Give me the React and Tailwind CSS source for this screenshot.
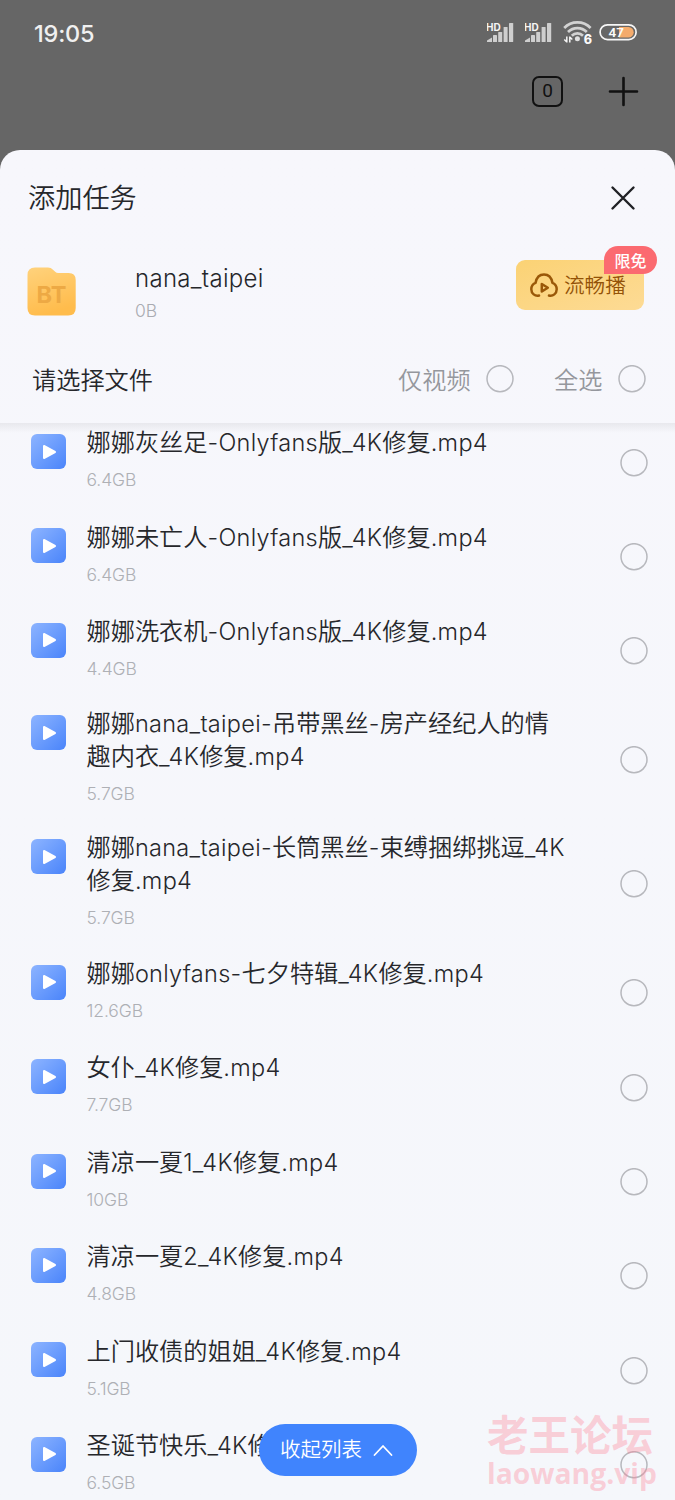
const files = [
  { name: "娜娜灰丝足-Onlyfans版_4K修复.mp4", size: "6.4GB" },
  { name: "娜娜未亡人-Onlyfans版_4K修复.mp4", size: "6.4GB" },
  { name: "娜娜洗衣机-Onlyfans版_4K修复.mp4", size: "4.4GB" },
  { name: "娜娜nana_taipei-吊带黑丝-房产经纪人的情\n趣内衣_4K修复.mp4", size: "5.7GB" },
  { name: "娜娜nana_taipei-长筒黑丝-束缚捆绑挑逗_4K\n修复.mp4", size: "5.7GB" },
  { name: "娜娜onlyfans-七夕特辑_4K修复.mp4", size: "12.6GB" },
  { name: "女仆_4K修复.mp4", size: "7.7GB" },
  { name: "清凉一夏1_4K修复.mp4", size: "10GB" },
  { name: "清凉一夏2_4K修复.mp4", size: "4.8GB" },
  { name: "上门收债的姐姐_4K修复.mp4", size: "5.1GB" },
  { name: "圣诞节快乐_4K修复.mp4", size: "6.5GB" },
];

function Signal() {
  return (
    <svg width="29" height="24" viewBox="0 0 29 24" className="shrink-0">
      <g fill="#cfcfcf">
        <path d="M0 22v-1.5l5-3v4.500z" />
        <rect x="6" y="15" width="4" height="7" rx="0.6" />
        <rect x="11.2" y="12" width="4" height="10" rx="0.6" />
        <rect x="16.600" y="7" width="4" height="15" rx="0.6" />
        <rect x="22" y="3" width="4.200" height="19" rx="0.6" />
      </g>
      <text x="-1" y="10.500" fontSize="10" fontWeight="700" fill="#f5f5f5" fontFamily="Inter, sans-serif">
        HD
      </text>
    </svg>
  );
}

function Wifi() {
  return (
    <svg width="30" height="26" viewBox="0 0 30 26" className="shrink-0">
      <g fill="none" stroke="#d2d2d2" strokeWidth="2.7">
        <path d="M1.2 9a18.500 18.500 0 0 1 26.400 0" />
        <path d="M5 13a13.200 13.200 0 0 1 18.800 0" />
        <path d="M8.800 16.800a7.900 7.900 0 0 1 11.200 0" />
      </g>
      <circle cx="14.400" cy="19.800" r="2.500" fill="#e0e0e0" />
      <path d="M3.800 17.500v6M1.300 20.500l2.500 2.600M6.800 23.500v-6M6.800 18l2.500 2.600" stroke="#f5f5f5" strokeWidth="1.500" fill="none" />
      <text x="20.800" y="25" fontSize="12.500" fontWeight="800" fill="#fafafa" fontFamily="Inter, sans-serif">
        6
      </text>
    </svg>
  );
}

function Battery() {
  return (
    <svg width="39" height="18" viewBox="0 0 39 18" className="shrink-0">
      <path d="M20 4h9.500a5.200 5.200 0 0 1 0 10.400H20z" fill="#f4ab6c" />
      <rect x="1.100" y="1.800" width="36" height="14.800" rx="7.400" fill="none" stroke="#f7f7f7" strokeWidth="1.700" />
      <text x="9.500" y="14" fontSize="13.500" fontWeight="600" fill="#fafafa" fontFamily="Roboto, sans-serif">
        47
      </text>
    </svg>
  );
}

function Folder() {
  return (
    <svg width="49" height="49" viewBox="0 0 49 49" className="shrink-0">
      <defs>
        <linearGradient id="folder" x1="0" y1="0" x2="0.3" y2="1">
          <stop offset="0" stopColor="#ffd27c" />
          <stop offset="1" stopColor="#ffbc4c" />
        </linearGradient>
      </defs>
      <path d="M0.500 8q0-7.500 7.500-7.500h13q3 0 5 2.200l2.200 2q1.300 1.300 3 1.300h10.500q7 0 7 7v28q0 7.500-7.500 7.500H8Q0.500 48.500 0.500 41z" fill="url(#folder)" />
      <text x="24.500" y="35.500" textAnchor="middle" fontSize="23.500" fontWeight="700" fill="#eda944" fontFamily="Inter, sans-serif">
        BT
      </text>
    </svg>
  );
}

function CloudPlay() {
  return (
    <svg width="28" height="24" viewBox="0 0 28 24" fill="none" stroke="#9a5808" strokeWidth="2.500" strokeLinecap="round" strokeLinejoin="round" className="shrink-0">
      <path d="M9 22.500C5 23.500 1.300 20.500 1.300 16.300c0-3 1.600-5.300 4.200-6.400C6.500 4.800 9.600 1.500 14 1.500s7.500 3.300 8.500 8.400c2.600 1.100 4.200 3.400 4.200 6.400 0 4.200-3.700 7.200-7.700 6.200" />
      <path d="M11.800 11v7.500l6-3.750z" />
    </svg>
  );
}

function VideoIcon() {
  return (
    <span className="flex h-[35px] w-[35px] shrink-0 items-center justify-center rounded-[6px] bg-linear-to-br from-[#8db4ff] to-[#4a84fa]">
      <svg width="15" height="16" viewBox="0 0 15 16" className="ml-px">
        <path d="M2 2v12l11-6z" fill="#fff" stroke="#fff" strokeWidth="2" strokeLinejoin="round" />
      </svg>
    </span>
  );
}

function Radio() {
  return (
    <svg width="28" height="28" viewBox="0 0 28 28" className="block shrink-0">
      <circle cx="14" cy="13.700" r="13" fill="none" stroke="#b7b8bd" strokeWidth="1.500" />
    </svg>
  );
}

/** Latin runs are set slightly smaller than the Chinese glyphs around them. */
function MixedText({ text }) {
  return text.split(/([\x20-\x7e]+)/).map((part, i) =>
    i % 2 ? (
      <span key={i} className="text-[23.5px] tracking-[0.3px]">
        {part}
      </span>
    ) : (
      part
    )
  );
}

function FileRow({ file }) {
  const lines = file.name.split("\n");
  const wrapped = lines.length > 1;
  return (
    <li className={wrapped ? "flex h-[123.8px] shrink-0 pl-[31px] pr-[27px]" : "flex h-[94.4px] shrink-0 pl-[31px] pr-[27px]"}>
      <div className={wrapped ? "pt-[17px]" : "pt-[18.7px]"}>
        <VideoIcon />
      </div>
      <div className={wrapped ? "ml-[20.5px] flex-1 pt-[8.5px]" : "ml-[20.5px] flex-1 pt-[11px]"}>
        {lines.map((line) => (
          <p key={line} className="h-[33px] whitespace-nowrap text-[24.2px] leading-[33px] text-[#26272b]">
            <MixedText text={line} />
          </p>
        ))}
        <p className="mt-[9px] text-[17.5px] leading-6 tracking-[-0.1px] text-[#aeb0b5]">{file.size}</p>
      </div>
      <div className="flex items-center">
        <Radio />
      </div>
    </li>
  );
}

export default function App() {
  return (
    <div className="relative flex h-[1500px] w-[675px] flex-col overflow-hidden bg-[#666666] font-[Inter,'Noto_Sans_CJK_SC',sans-serif] font-[350]">
      <header className="h-[150px] shrink-0">
        <div className="flex h-16 items-center pl-[34px] pr-[37px]">
          <span className="mt-[3px] text-[23.5px] font-medium tracking-[-0.2px] text-[#f0f0f0]">19:05</span>
          <div className="ml-auto flex items-center">
            <Signal />
            <span className="w-[9px]" />
            <Signal />
            <span className="w-[9px]" />
            <Wifi />
            <span className="w-[6px]" />
            <Battery />
          </div>
        </div>
        <div className="flex h-[55px] items-center justify-end pr-9">
          <span className="flex h-[31px] w-[31px] items-center justify-center rounded-[7px] border-[2.5px] border-[#111] font-[Roboto,sans-serif] text-[19px] font-normal text-[#111]">
            0
          </span>
          <svg width="31" height="31" viewBox="0 0 31 31" className="ml-[45px]" stroke="#111" strokeWidth="2.600" strokeLinecap="round">
            <path d="M15.500 2v27M2 15.500h27" />
          </svg>
        </div>
      </header>

      <main className="flex min-h-0 flex-1 flex-col rounded-t-[20px] bg-linear-to-b from-[#f7f7fc] to-[#f5f7fb]">
        <div className="flex h-24 shrink-0 items-center justify-between pl-7 pr-[39px]">
          <h1 className="mt-[3px] text-[27.2px] text-[#26272b]">添加任务</h1>
          <svg width="26" height="26" viewBox="0 0 26 26" stroke="#202125" strokeWidth="2.400" strokeLinecap="round">
            <path d="M2.500 2.500l21 21M23.500 2.500l-21 21" />
          </svg>
        </div>

        <div className="flex h-[90px] shrink-0 items-center pl-[27px] pr-[31px]">
          <Folder />
          <div className="ml-[59px] mt-[7px] flex-1">
            <p className="text-[24px] leading-8 tracking-[0.3px] text-[#26272b]">nana_taipei</p>
            <p className="text-[17.5px] leading-8 text-[#a9abb1]">0B</p>
          </div>
          <div className="relative -mt-3 flex h-[50px] w-32 items-center rounded-[9px] bg-linear-to-br from-[#fbd274] to-[#fddb95] pl-[14px]">
            <CloudPlay />
            <span className="ml-[6px] mt-[2px] whitespace-nowrap text-[20.6px] text-[#935207]">流畅播</span>
            <span className="absolute -right-[13px] -top-[14px] flex h-7 w-[53px] items-center justify-center rounded-full rounded-bl-none bg-[#fb6a70] pt-px text-[16px] font-medium text-white">
              限免
            </span>
          </div>
        </div>

        <div className="flex h-[87px] shrink-0 items-center pl-8 pr-[29px] text-[24.2px]">
          <h2 className="mt-[3px] text-[#26272b]">请选择文件</h2>
          <div className="ml-auto flex items-center text-[#95979d]">
            <span className="mt-[3px]">仅视频</span>
            <span className="ml-[15.5px] mr-10">
              <Radio />
            </span>
            <span className="mt-[3px]">全选</span>
            <span className="ml-[15.5px]">
              <Radio />
            </span>
          </div>
        </div>

        <div className="relative min-h-0 flex-1 overflow-hidden">
          <ul className="-mt-[7.7px] flex flex-col">
            {files.map((file) => (
              <FileRow key={file.name} file={file} />
            ))}
          </ul>
          <div className="absolute inset-x-0 top-0 h-[10px] bg-linear-to-b from-black/6 to-transparent" />
        </div>
      </main>

      <button className="absolute left-[259px] top-[1424px] flex h-[52px] w-[158px] items-center rounded-full bg-[#4084fd] pl-[21px] pt-px text-[20.5px] text-white">
        收起列表
        <svg width="20" height="13" viewBox="0 0 20 13" className="ml-[11px]" fill="none" stroke="#fff" strokeWidth="1.800" strokeLinecap="round" strokeLinejoin="round">
          <path d="M1.500 11L10 2l8.500 9" />
        </svg>
      </button>

      <div className="pointer-events-none absolute left-[487px] top-[1408px] whitespace-nowrap font-bold text-[#ff8095]/35">
        <p className="font-['Noto_Sans_CJK_SC',sans-serif] text-[41.5px] leading-[50px]">老王论坛</p>
        <p className="font-['Open_Sans',sans-serif] text-[28.3px] leading-[30px]">laowang.vip</p>
      </div>
    </div>
  );
}
